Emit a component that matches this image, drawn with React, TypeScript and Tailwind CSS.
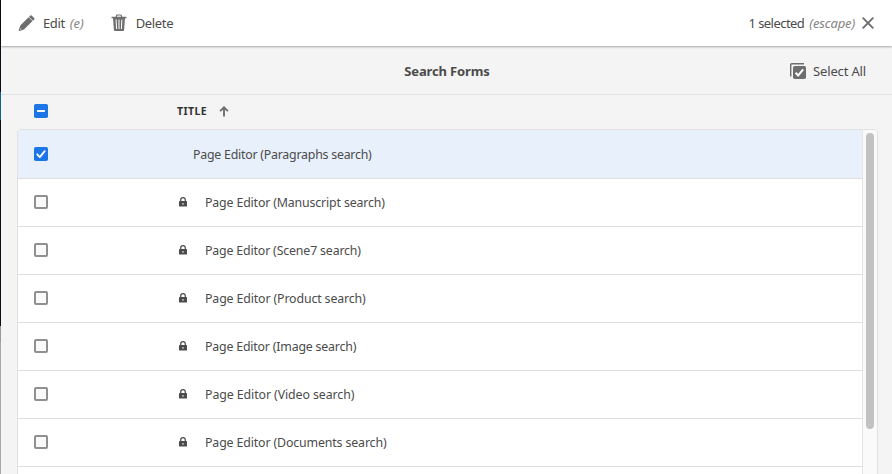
import React from "react";

const rows = [
  { title: "Page Editor (Paragraphs search)", selected: true, tracking: "tracking-[-0.24px]" },
  { title: "Page Editor (Manuscript search)", selected: false, tracking: "tracking-[-0.16px]" },
  { title: "Page Editor (Scene7 search)", selected: false, tracking: "tracking-[-0.17px]" },
  { title: "Page Editor (Product search)", selected: false, tracking: "tracking-[-0.14px]" },
  { title: "Page Editor (Image search)", selected: false, tracking: "tracking-[-0.2px]" },
  { title: "Page Editor (Video search)", selected: false, tracking: "tracking-[-0.09px]" },
  { title: "Page Editor (Documents search)", selected: false, tracking: "tracking-[-0.14px]" },
  { title: "", selected: false, tracking: "" },
];

function EditIcon() {
  return (
    <svg className="h-[18px] w-[18px] shrink-0" viewBox="0 0 18 18" fill="#6e6e6e">
      <path d="M12.300 1.500a.9.9 0 0 1 1.300 0l2.600 2.600a.9.9 0 0 1 0 1.300l-1.300 1.300-3.900-3.900z" />
      <path d="M10.600 3.200l3.900 3.900-8.500 8.300-4.700 1.500a.5.5 0 0 1-.6-.6l1.600-4.700zM2.600 14.200l-.6 1.500 1.500-.6z" fillRule="evenodd" />
    </svg>
  );
}

function TrashIcon() {
  return (
    <svg className="h-[18px] w-4 shrink-0" viewBox="0 0 16 18">
      <path d="M5.500 3V1.900q0-.9.900-.9h3.200q.9 0 .9.900V3" fill="none" stroke="#6e6e6e" strokeWidth="1.200" />
      <path d="M1 2.700h14q.5 0 .5.500v.5q0 .5-.5.500H1q-.5 0-.5-.5v-.5q0-.5.500-.5z" fill="#6e6e6e" />
      <path d="M2 4h12l-.9 12q-.1.900-1 .9H3.900q-.9 0-1-.9z" fill="#6e6e6e" />
      <path d="M5.100 5.500l.5 9.500M8 5.500V15M10.900 5.500l-.5 9.500" fill="none" stroke="#fff" strokeWidth="1" />
    </svg>
  );
}

function SelectAllIcon() {
  return (
    <svg className="mb-[2px] h-4 w-4 shrink-0" viewBox="0 0 16 16">
      <path d="M.7 13.500V1.900Q.7.700 1.900.700H14" fill="none" stroke="#6e6e6e" strokeWidth="1.400" />
      <rect x="3" y="3" width="13" height="13" rx="1.800" fill="#6e6e6e" />
      <path d="M5.600 9.700l2.600 2.700 5-6" fill="none" stroke="#fff" strokeWidth="2" />
    </svg>
  );
}

function LockIcon() {
  return (
    <svg className="mb-[2px] h-[10px] w-2 shrink-0" viewBox="0 0 8 10">
      <path d="M1.700 4.500V3a2.300 2.300 0 0 1 4.600 0v1.500" fill="none" stroke="#4b4b4b" strokeWidth="1.200" />
      <rect y="4" width="8" height="5.500" rx=".6" fill="#4b4b4b" />
      <path d="M3.500 6h1v1.700h-1z" fill="#fff" />
    </svg>
  );
}

function Checkbox({ state }: { state: "on" | "off" | "mixed" }) {
  if (state === "off") {
    return <span className="mb-px h-[14px] w-[14px] shrink-0 rounded-[2px] border-2 border-[#909090] bg-[#fafafa]" />;
  }
  return (
    <svg className="h-[14px] w-[14px] shrink-0" viewBox="0 0 14 14">
      <rect width="14" height="14" rx="1.800" fill="#1c76e5" />
      {state === "on" ? (
        <path d="M3.200 7.300l2.600 2.800 4.900-6" fill="none" stroke="#fff" strokeWidth="1.800" strokeLinecap="round" strokeLinejoin="round" />
      ) : (
        <rect x="3" y="6" width="8" height="2" rx=".8" fill="#fff" />
      )}
    </svg>
  );
}

export default function App() {
  return (
    <div className="flex h-[474px] w-[892px] overflow-hidden bg-[#f4f4f4] font-['Noto_Sans',sans-serif] text-[13px] text-[#4b4b4b]">
      <div className="flex w-px shrink-0 flex-col bg-[#a9a9a9]">
        <div className="h-[92px] bg-[#0d0b17]" />
        <div className="h-7 bg-[#0b6194]" />
        <div className="h-[206px] bg-[#0d0b17]" />
        <div className="h-4 bg-[#999999]" />
      </div>
      <div className="flex min-w-0 flex-1 flex-col">
        <header className="relative flex h-[46px] shrink-0 items-center bg-white pr-[18px] pl-[17px] shadow-[0_1px_2px_rgba(0,0,0,0.32)]">
          <button className="flex items-center">
            <EditIcon />
            <span className="ml-[7px] pt-[2px] tracking-[-0.4px]">Edit</span>
            <span className="ml-[5px] pt-[2px] text-[#858585] italic">(e)</span>
          </button>
          <button className="ml-[27px] flex items-center">
            <TrashIcon />
            <span className="ml-[9px] pt-[2px] tracking-[-0.35px]">Delete</span>
          </button>
          <button className="ml-auto flex items-center">
            <span className="pt-[2px] tracking-[-0.55px]">1 selected</span>
            <span className="ml-[5px] pt-[2px] tracking-[-0.15px] text-[#858585] italic">(escape)</span>
            <svg className="ml-[7px] h-3 w-3" viewBox="0 0 12 12">
              <path d="M1.200 1.200l9.600 9.600m0-9.600l-9.600 9.600" stroke="#6e6e6e" strokeWidth="1.900" strokeLinecap="round" />
            </svg>
          </button>
        </header>
        <div className="grid h-[49px] shrink-0 grid-cols-[1fr_auto_1fr] items-center border-b border-[#e1e1e1] pt-[3px] pr-[26px] pl-[27px]">
          <span />
          <h1 className="font-bold tracking-[-0.15px]">Search Forms</h1>
          <button className="flex items-center justify-self-end">
            <SelectAllIcon />
            <span className="ml-[7px] tracking-[-0.15px]">Select All</span>
          </button>
        </div>
        <div className="flex h-[34px] shrink-0 items-center pb-[2px] pl-[33px] text-[#323232]">
          <Checkbox state="mixed" />
          <span className="ml-[129px] pt-px text-[10.5px] font-bold tracking-[0.4px]">TITLE</span>
          <svg className="ml-[12px] h-[11px] w-[10px]" viewBox="0 0 10 11">
            <path d="M5 10.500V1.500M1.100 5.200L5 1.300 8.900 5.200" fill="none" stroke="#6e6e6e" strokeWidth="1.900" />
          </svg>
        </div>
        <div className="ml-4 flex h-[360px] w-[861px] shrink-0 overflow-hidden rounded-t-[4px] border border-[#e1e1e1] bg-white">
          <div className="min-w-0 flex-1">
            {rows.map((row) => (
              <div
                key={row.title}
                className={`flex items-center border-b border-[#dedede] pl-4 ${row.selected ? "h-[49px] bg-[#e8f0fc]" : "h-12"}`}
              >
                <Checkbox state={row.selected ? "on" : "off"} />
                <div className={`flex items-center ${row.selected ? "pt-[2px] pl-[145px]" : "pl-[131px]"}`}>
                  {!row.selected && <LockIcon />}
                  <span className={`${row.selected ? "" : "ml-[18px]"} origin-left scale-x-95 whitespace-nowrap ${row.tracking}`}>
                    {row.title}
                  </span>
                </div>
              </div>
            ))}
          </div>
          <div className="w-[15px] border-l border-[#e5e5e5] bg-[#fafafa] pt-[3px] pl-[3px]">
            <div className="h-[296px] w-2 rounded-full bg-[#c2c2c2]" />
          </div>
        </div>
      </div>
    </div>
  );
}
